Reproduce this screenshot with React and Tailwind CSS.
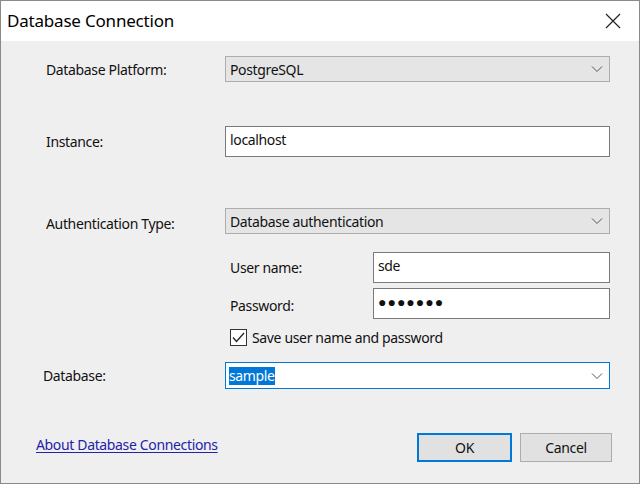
import React from 'react';

const font = { fontFamily: '"Noto Sans", "Open Sans", sans-serif' };

const Chevron = () => (
  <svg width="12" height="8" viewBox="0 0 12 8" className="shrink-0">
    <path d="M1 1.5 L6 6.5 L11 1.5" fill="none" stroke="#555" strokeWidth="1" />
  </svg>
);

const Select = ({ value, className = '' }) => (
  <div className={`flex items-center justify-between h-[26px] w-[385px] pl-[4px] pr-[6px] bg-[#e5e5e5] border border-[#adadad] ${className}`}>
    <span className="text-[14px] tracking-[-0.35px] text-[#111]">{value}</span>
    <Chevron />
  </div>
);

const TextBox = ({ children, className = '' }) => (
  <div className={`flex items-start h-[31px] bg-white border border-[#7a7a7a] pl-[4px] pt-[2px] ${className}`}>
    {children}
  </div>
);

export default function App() {
  return (
    <div className="w-[640px] h-[484px] flex flex-col bg-[#f0eff0] border border-[#8a8a8a] overflow-hidden text-[#111] text-[14px] tracking-[-0.35px]" style={font}>
      {/* title bar */}
      <div className="h-[40px] shrink-0 bg-white flex items-center justify-between pl-[6px] pr-[18px]">
        <span className="text-[17px] tracking-[-0.2px] text-black">Database Connection</span>
        <svg width="16" height="16" viewBox="0 0 16 16">
          <path d="M1 1 L15 15 M15 1 L1 15" stroke="#222" strokeWidth="1.2" />
        </svg>
      </div>

      <div className="flex flex-col pl-[44px] pr-[29px] pt-[15px]">
        <div className="flex items-center justify-between">
          <span className="pl-[1px]">Database Platform:</span>
          <Select value="PostgreSQL" />
        </div>

        <div className="flex items-center justify-between mt-[44px]">
          <span className="pl-[1px]">Instance:</span>
          <TextBox className="w-[385px]">
            <span>localhost</span>
          </TextBox>
        </div>

        <div className="flex items-center justify-between mt-[51px]">
          <span className="pl-[1px] pt-[4px]">Authentication Type:</span>
          <Select value="Database authentication" />
        </div>

        <div className="flex flex-col ml-[185px] mt-[18px]">
          <div className="flex items-center justify-between">
            <span>User name:</span>
            <TextBox className="w-[237px]">
              <span>sde</span>
            </TextBox>
          </div>
          <div className="flex items-center justify-between mt-[5px]">
            <span className="pt-[3px]">Password:</span>
            <TextBox className="w-[237px] items-center pt-0">
              <span className="tracking-[1px] pb-[1px]">●●●●●●●</span>
            </TextBox>
          </div>
          <div className="flex items-center gap-[5px] mt-[8px]">
            <div className="w-[17px] h-[17px] bg-white border border-[#333] flex items-center justify-center">
              <svg width="13" height="11" viewBox="0 0 13 11">
                <path d="M1 5.5 L4.5 9.5 L12 1" fill="none" stroke="#222" strokeWidth="1.3" />
              </svg>
            </div>
            <span>Save user name and password</span>
          </div>
        </div>

        <div className="flex items-center justify-between mt-[14px] -ml-[2px]">
          <span>Database:</span>
          <div className="flex items-center justify-between h-[27px] w-[385px] pl-[3px] pr-[6px] bg-white border border-[#0078d7]">
            <span className="bg-[#0078d7] text-white leading-[18px]">sample</span>
            <Chevron />
          </div>
        </div>
      </div>

      <div className="flex items-center justify-between mt-auto mb-[21px] pl-[35px] pr-[27px]">
        <a className="text-[#2323a8] underline underline-offset-2 pb-[7px]">About Database Connections</a>
        <div className="flex gap-[8px]">
          <button className="w-[95px] h-[29px] bg-[#e1e1e1] border-2 border-[#0078d7]">OK</button>
          <button className="w-[92px] h-[29px] bg-[#e1e1e1] border border-[#adadad]">Cancel</button>
        </div>
      </div>
    </div>
  );
}
